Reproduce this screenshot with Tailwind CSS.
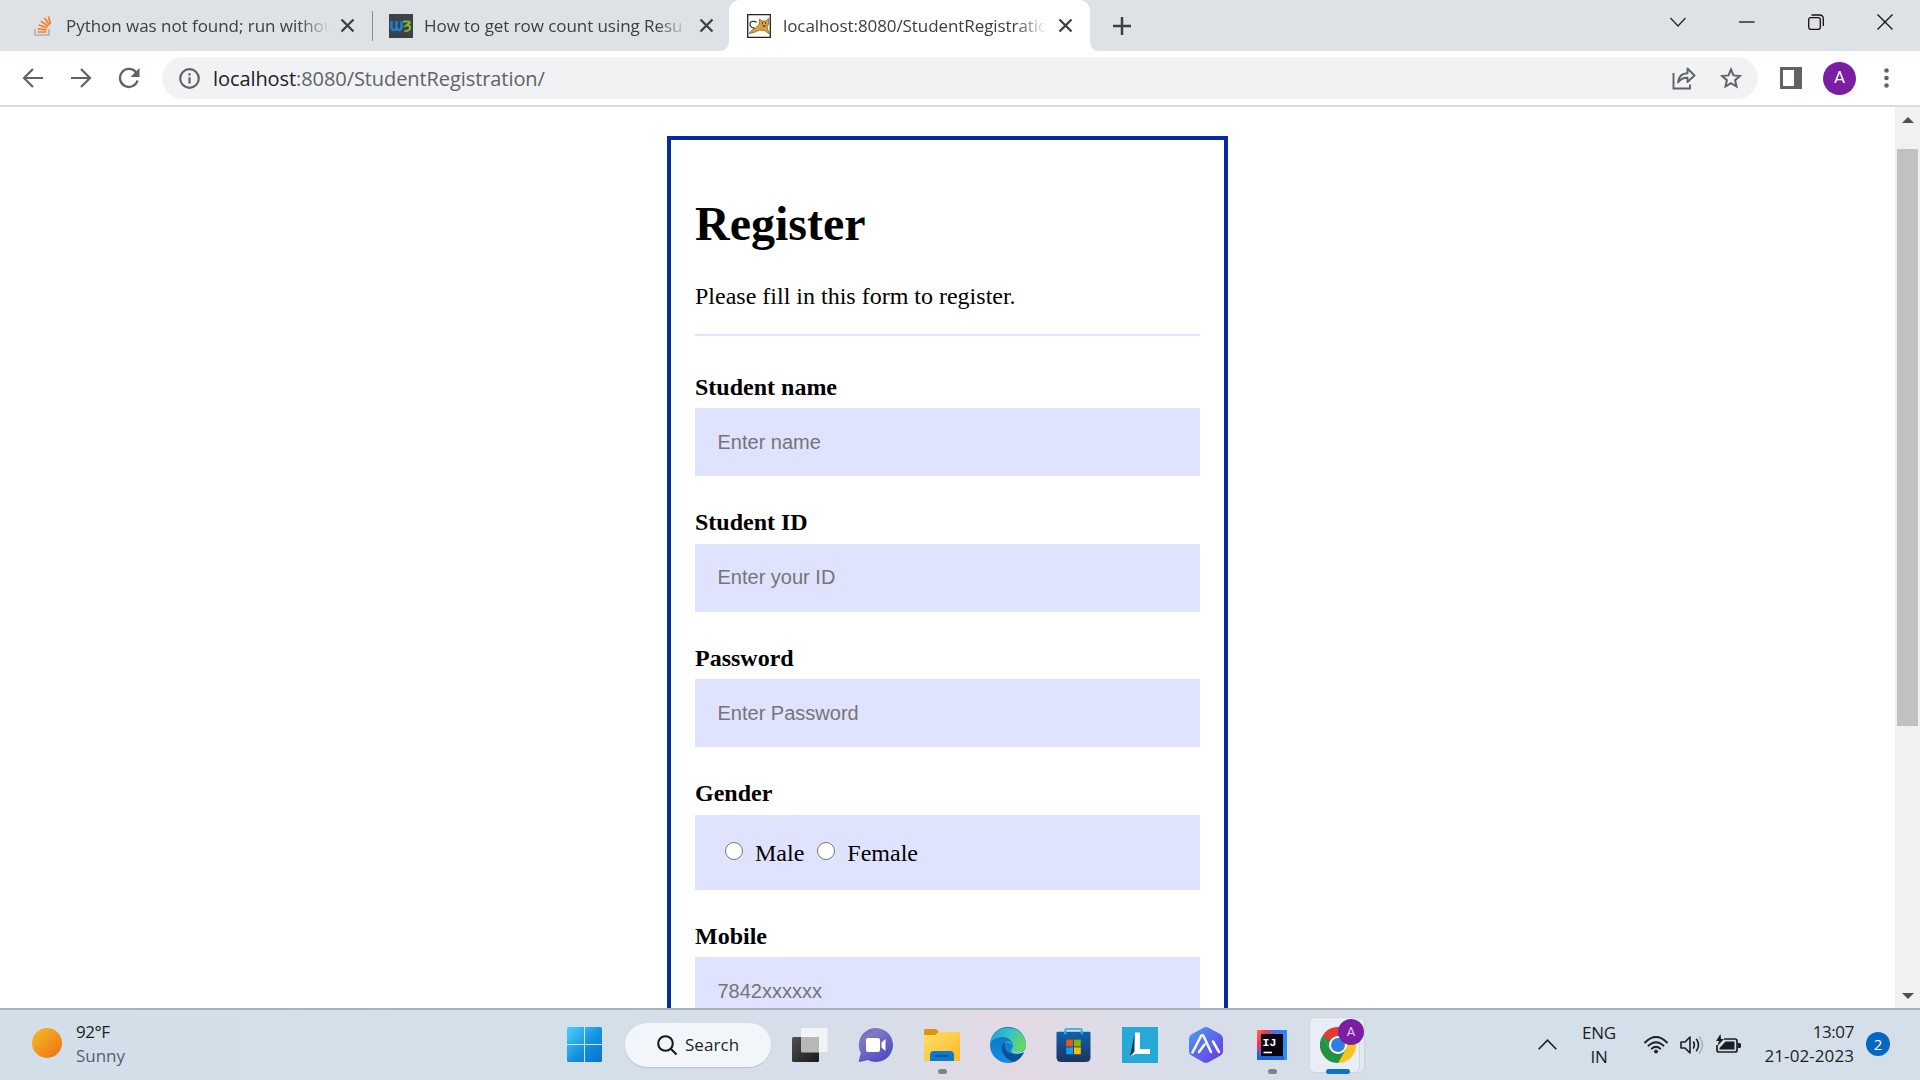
<!DOCTYPE html>
<html lang="en">
<head>
<meta charset="utf-8">
<title>Student Registration</title>
<script src="https://cdn.jsdelivr.net/npm/@tailwindcss/browser@4"></script>
</head>
<body class="flex h-[1080px] w-[1920px] flex-col overflow-hidden bg-white font-['Open_Sans',sans-serif]">

<!-- Tab strip -->
<header class="flex h-[51px] shrink-0 bg-[#dee1e6] text-[17px] text-[#3c4043]">
  <div class="flex w-[372px] items-center pl-[33px]">
    <svg class="mt-[1px] h-5 w-[19px]" viewBox="0 0 19 20" fill="none"><path d="M2 13v6h14v-6" stroke="#bcbbbb" stroke-width="2"/><path d="M4.500 16h9M4.700 12.800l9 1M5.700 9l8.500 2.700M8 5.200l7.300 5M11.500 2l5 7M15.500 .5l2 7.500" stroke="#f48024" stroke-width="1.700"/></svg>
    <span class="ml-[14px] w-[264px] whitespace-nowrap tracking-[-0.04px] [mask-image:linear-gradient(to_right,#000_88%,transparent)]">Python was not found; run withou</span>
    <svg class="ml-[10px] h-[15px] w-[15px] shrink-0" viewBox="0 0 15 15" stroke="#3c4043" stroke-width="2.300"><path d="M1.500 1.500l12 12M13.500 1.500l-12 12"/></svg>
  </div>
  <div class="mt-[11px] h-[30px] w-px bg-[#858a90]"></div>
  <div class="flex w-[356px] items-center pl-4">
    <svg class="h-6 w-6 shrink-0" viewBox="0 0 24 24" fill="none"><path fill="#3d4149" d="M0 0h24v24H0z"/><path d="M2.500 7v6q0 3 2.500 3t2.500-3V7v6q0 3 2.500 3t2.500-3V7" stroke="#1b83cb" stroke-width="2.500"/><path d="M14 7.500h5.500q1.500 0 1 1.500l-3 2.500q3.800-.5 3.500 2.500-.3 3-5.500 3" stroke="#86b52e" stroke-width="2.200"/></svg>
    <span class="ml-[11px] w-[264px] whitespace-nowrap tracking-[-0.06px] [mask-image:linear-gradient(to_right,#000_88%,transparent)]">How to get row count using Resu</span>
    <svg class="ml-[11px] h-[15px] w-[15px] shrink-0" viewBox="0 0 15 15" stroke="#3c4043" stroke-width="2.300"><path d="M1.500 1.500l12 12M13.500 1.500l-12 12"/></svg>
  </div>
  <div class="relative flex w-[361px] items-center rounded-t-[11px] bg-white pl-[18px]">
    <svg class="absolute bottom-0 left-[-10px] h-[10px] w-[10px]" viewBox="0 0 10 10"><path fill="#fff" d="M10 0v10H0Q10 10 10 0z"/></svg>
    <svg class="absolute right-[-10px] bottom-0 h-[10px] w-[10px]" viewBox="0 0 10 10"><path fill="#fff" d="M0 0v10h10Q0 10 0 0z"/></svg>
    <svg class="h-6 w-6 shrink-0" viewBox="0 0 24 24" fill="none"><path fill="#fbfaf6" stroke="#222" stroke-width="1.300" d="M.7.700h22.600v22.600H.7z"/><path d="M6.500 14Q3 13 3 10t3.500-2.500q2-.3 3 1" stroke="#333" stroke-width="1.200"/><path d="M12.500 10V5l2.500 2h4l2.500-2.500V10l-1.500 3.500 2.500 6.500-5-3.500-5-.5-5.500 2.500-5 1Q4 16 9 13.500z" fill="#d9a03c" stroke="#7a5a20" stroke-width=".7"/><path d="M15 9h.9M18.200 9h.9" stroke="#222" stroke-width="1.300"/><path d="M15.500 11.500l1.500 1 1.500-1M7.500 15l-1.500-2" stroke="#222" stroke-width="1"/></svg>
    <span class="ml-3 w-[264px] whitespace-nowrap tracking-[-0.08px] [mask-image:linear-gradient(to_right,#000_88%,transparent)]">localhost:8080/StudentRegistratio</span>
    <svg class="ml-[11px] h-[15px] w-[15px] shrink-0" viewBox="0 0 15 15" stroke="#3c4043" stroke-width="2.300"><path d="M1.500 1.500l12 12M13.500 1.500l-12 12"/></svg>
  </div>
  <svg class="mt-4 ml-[22px] h-5 w-5" viewBox="0 0 20 20" stroke="#3c4043" stroke-width="2.500"><path d="M10 1v18M1 10h18"/></svg>
  <div class="ml-auto flex h-[43px] items-center gap-[53px] pr-[27px] text-black">
    <svg class="h-4 w-4" viewBox="0 0 16 16" fill="none" stroke="#222" stroke-width="1.200"><path d="M.5 4l7.500 8 7.500-8"/></svg>
    <svg class="h-4 w-4" viewBox="0 0 16 16" fill="none" stroke="#111" stroke-width="1.300"><path d="M0 8h15.500"/></svg>
    <svg class="h-4 w-4" viewBox="0 0 16 16" fill="none" stroke="#111" stroke-width="1.300"><rect x=".7" y="3.700" width="11.600" height="11.600" rx="2"/><path d="M3.500 1h8.500a3.300 3.300 0 0 1 3.300 3.300v7.700"/></svg>
    <svg class="h-4 w-4" viewBox="0 0 16 16" fill="none" stroke="#111" stroke-width="1.300"><path d="M.5.500l15 15M15.500.500l-15 15"/></svg>
  </div>
</header>

<!-- Toolbar -->
<nav class="flex h-[56px] shrink-0 items-center border-b-2 border-[#dadce0] bg-white pl-[22px]">
  <svg class="h-[22px] w-[22px]" viewBox="0 0 22 22" fill="none" stroke="#5f6368" stroke-width="2.200"><path d="M21 11H2.500M11 2L2 11l9 9"/></svg>
  <svg class="ml-[26px] h-[22px] w-[22px]" viewBox="0 0 22 22" fill="none" stroke="#5f6368" stroke-width="2.200"><path d="M1 11h18.500M11 2l9 9-9 9"/></svg>
  <svg class="ml-[26px] h-[22px] w-[22px]" viewBox="0 0 22 22" fill="none"><path d="M18.500 6A9 9 0 1 0 19.600 13.500" stroke="#5f6368" stroke-width="2.300"/><path d="M21.500 1v9h-9z" fill="#5f6368"/></svg>
  <div class="ml-[22px] flex h-[42px] w-[1596px] items-center rounded-full bg-[#f0f2f4] pl-[17px]">
    <svg class="h-[21px] w-[21px]" viewBox="0 0 21 21" fill="none" stroke="#5f6368" stroke-width="2.200"><circle cx="10.500" cy="10.500" r="9.300"/><path d="M10.500 9.300v6.200M10.500 5.300v2.300"/></svg>
    <span class="mt-[2px] ml-[13px] text-[20px] leading-none tracking-[-0.08px] whitespace-nowrap text-[#5f6368]"><span class="text-[#202124]">localhost</span>:8080/StudentRegistration/</span>
    <svg class="ml-auto h-6 w-6" viewBox="0 0 24 24" fill="none" stroke="#5f6368" stroke-width="1.900"><path d="M1.500 7v15.500H18v-4"/><path d="M6 16.500Q7 7.500 15.500 7.300V2.500l7 7-7 6.500v-4.300Q9.500 11.500 6 16.500z" stroke-linejoin="round"/></svg>
    <svg class="mr-4 ml-[24px] h-[22px] w-[22px]" viewBox="0 0 22 22" fill="none" stroke="#5f6368" stroke-width="2"><path d="M11 2.500l2.500 5.900 6.400.6-4.800 4.200 1.400 6.300L11 16.200l-5.500 3.300 1.400-6.300L2.100 9l6.400-.6z"/></svg>
  </div>
  <svg class="ml-[22px] h-[22px] w-[22px]" viewBox="0 0 22 22"><path fill="#5f6368" d="M0 0h22v22H0z"/><path fill="#fff" d="M3 3h11v16H3z"/></svg>
  <div class="ml-[21px] flex h-[33px] w-[33px] items-center justify-center rounded-full bg-[#7b1fa2] font-['Roboto'] text-[17px] text-white">A</div>
  <svg class="ml-[28px] h-5 w-[5px]" viewBox="0 0 5 20" fill="#5f6368"><circle cx="2.500" cy="2.500" r="2.300"/><circle cx="2.500" cy="10" r="2.300"/><circle cx="2.500" cy="17.500" r="2.300"/></svg>
</nav>

<!-- Page viewport -->
<div class="flex h-[901px] shrink-0 overflow-hidden">
  <main class="h-[901px] w-[1895px] overflow-hidden pt-[29px] pl-[667px]">
    <form class="h-[1100px] w-[561px] border-4 border-[#062a9f] px-6 pt-[56px] font-['Liberation_Serif',serif] text-[24px] leading-[28px] text-black">
      <h1 class="text-[48px] leading-[55px] font-bold">Register</h1>
      <p class="mt-[31px]">Please fill in this form to register.</p>
      <hr class="mt-[24px] mb-[37px] border-t-2 border-[#dfe3fe]">
      <div class="w-[505px]">
        <label class="block font-bold">Student name</label>
        <input class="mt-[7px] block h-[68px] w-full bg-[#dfe3fe] px-[22.5px] font-['Liberation_Sans',sans-serif] text-[20px] placeholder:text-[#757575]" placeholder="Enter name">
        <label class="mt-[32px] block font-bold">Student ID</label>
        <input class="mt-[8px] block h-[68px] w-full bg-[#dfe3fe] px-[22.5px] pb-[2px] font-['Liberation_Sans',sans-serif] text-[20px] placeholder:text-[#757575]" placeholder="Enter your ID">
        <label class="mt-[32px] block font-bold">Password</label>
        <input class="mt-[7px] block h-[68px] w-full bg-[#dfe3fe] px-[22.5px] font-['Liberation_Sans',sans-serif] text-[20px] placeholder:text-[#757575]" placeholder="Enter Password">
        <label class="mt-[32px] block font-bold">Gender</label>
        <div class="mt-[8px] flex h-[75px] items-center bg-[#dfe3fe] pl-[30px]">
          <span class="mt-[-4px] h-[18px] w-[18px] rounded-full border-[1.5px] border-[#767676] bg-white"></span><span class="ml-[12px]">Male</span>
          <span class="mt-[-4px] ml-[13px] h-[18px] w-[18px] rounded-full border-[1.5px] border-[#767676] bg-white"></span><span class="ml-[12px]">Female</span>
        </div>
        <label class="mt-[32px] block font-bold">Mobile</label>
        <input class="mt-[7px] block h-[68px] w-full bg-[#dfe3fe] px-[22.5px] font-['Liberation_Sans',sans-serif] text-[20px] placeholder:text-[#757575]" placeholder="7842xxxxxx">
      </div>
    </form>
  </main>
  <aside class="flex w-[25px] flex-col items-center bg-[#f1f1f1]">
    <svg class="mt-[10px] h-[6px] w-[12px]" viewBox="0 0 12 6"><path fill="#505050" d="M6 0l6 6H0z"/></svg>
    <div class="mt-[26px] h-[577px] w-[21px] bg-[#c1c1c1]"></div>
    <svg class="mt-auto mb-[9px] h-[6px] w-[12px]" viewBox="0 0 12 6"><path fill="#505050" d="M6 6L0 0h12z"/></svg>
  </aside>
</div>

<!-- Taskbar -->
<footer class="flex h-[72px] shrink-0 items-center border-t-2 border-[#a9b1bb] bg-[linear-gradient(to_right,#d2dfe9_0%,#d3dfe9_28%,#d8dee9_46%,#e3d9e4_53%,#d9dee9_60%,#d3dfe9_75%,#d4dfea_100%)] text-[16px] leading-6 text-[#1b1f24]">
  <div class="flex w-[551px] items-center pl-8">
    <div class="mt-[-4px] h-[30px] w-[30px] rounded-full bg-linear-to-br from-[#f0bd2c] to-[#f26a0c]"></div>
    <div class="mt-[-3px] ml-[14px] text-[17px]"><div class="tracking-[-0.5px]">92°F</div><div class="tracking-[-0.05px] text-[#56606c]">Sunny</div></div>
  </div>
  <div class="flex w-[66px] justify-center">
    <svg class="mt-[-1px] h-[35px] w-[35px]" viewBox="0 0 35 35"><defs><linearGradient id="win" x1="0" y1="0" x2="1" y2="1"><stop stop-color="#4fd0fc"/><stop offset=".55" stop-color="#1391e0"/><stop offset="1" stop-color="#0672ce"/></linearGradient></defs><path fill="url(#win)" d="M1.500 0H17v17H0V1.500Q0 0 1.500 0zM18 0h15.500Q35 0 35 1.500V17H18zM0 18h17v17H1.500Q0 35 0 33.500zM18 18h17v15.500q0 1.500-1.500 1.500H18z"/></svg>
  </div>
  <div class="ml-2 flex h-[44px] w-[146px] items-center rounded-full bg-[#f2f6fa] pl-8 shadow-[0_1px_1px_#b9c1cc]">
    <svg class="h-[20px] w-[20px]" viewBox="0 0 20 20" fill="none" stroke="#16191d" stroke-width="2.100"><circle cx="8.500" cy="8.500" r="7.300"/><path d="M13.500 13.500l6 6"/></svg>
    <span class="ml-2 text-[17px] tracking-[0.05px]">Search</span>
  </div>
  <div class="ml-[6px] flex">
    <div class="relative flex h-[56px] w-[66px] items-center justify-center">
      <svg class="mt-[-1px] h-[36px] w-[36px]" viewBox="0 0 36 36"><defs><linearGradient id="dark" x1="0" y1="0" x2="1" y2="1"><stop stop-color="#505050"/><stop offset="1" stop-color="#191919"/></linearGradient></defs><rect y="10" width="27" height="25" rx="1.500" fill="url(#dark)"/><rect x="9" y="1" width="26.500" height="24" rx="1.500" fill="#f5f5f5" fill-opacity=".9"/><path d="M9 10h18v15.500H10.500Q9 25.500 9 24.500z" fill="#b8b8b8"/></svg>
    </div>
    <div class="relative flex h-[56px] w-[66px] items-center justify-center">
      <svg class="mt-[-1px] mr-[1px] h-[36px] w-[36px]" viewBox="0 0 36 36"><defs><linearGradient id="chat" x1="0" y1="0" x2=".6" y2="1"><stop stop-color="#5b62bd"/><stop offset=".3" stop-color="#8079c4"/><stop offset="1" stop-color="#504ec3"/></linearGradient></defs><path fill="url(#chat)" d="M18 1a17 17 0 1 1-8 32L2 35q-1.500 0-1.200-1.500L2.800 26A17 17 0 0 1 18 1z"/><rect x="8" y="11" width="14" height="14" rx="2" fill="#fff"/><path fill="#fff" d="M23.500 15.500L27.500 12v12l-4-3.500z"/></svg>
    </div>
    <div class="relative flex h-[56px] w-[66px] items-center justify-center">
      <svg class="mt-[-1px] h-[36px] w-[36px]" viewBox="0 0 36 36"><defs><linearGradient id="fold" x1="0" y1="0" x2="1" y2="1"><stop stop-color="#ffdf6e"/><stop offset="1" stop-color="#fcb91f"/></linearGradient></defs><path fill="#d9960e" d="M0 3.500Q0 2 1.500 2H12l4 4-4 4H0z"/><path fill="url(#fold)" d="M0 8h11l4-3h19.500Q36 5 36 6.500V34H0z"/><path fill="#0f79cb" d="M6 34v-6q0-4 4-4h16q4 0 4 4v6z"/><path d="M11 29h14" stroke="#07508e" stroke-width="1.500"/></svg>
      <span class="absolute bottom-[-1px] h-[5px] w-[9px] rounded-full bg-[#7d838b]"></span>
    </div>
    <div class="relative flex h-[56px] w-[66px] items-center justify-center">
      <svg class="mt-[-1px] h-[36px] w-[36px]" viewBox="0 0 36 36"><defs><linearGradient id="eg" x1="0" y1=".3" x2="1" y2=".6"><stop stop-color="#1fa2dc"/><stop offset=".5" stop-color="#36c4c4"/><stop offset="1" stop-color="#6bdb55"/></linearGradient><linearGradient id="eb" x1="0" y1="0" x2="0" y2="1"><stop stop-color="#0f6fc0"/><stop offset="1" stop-color="#1290e0"/></linearGradient></defs><circle cx="18" cy="18" r="18" fill="url(#eb)"/><path fill="url(#eg)" d="M.2 16.500A18 18 0 0 1 36 17q0 8.500-9 8.500-5.500 0-6-2 2-2 2-5Q21.500 10 12.500 10 4 10 .2 16.500z"/><path fill="#d7dde9" d="M14.500 17q3-4 7 0 2 3-.3 6 .2 3.500 6.300 3.500 3.500 0 6-1.600.8 0 .3 1.100L30 32l7 4V18q-1.500 7.500-9.500 7.500-5 0-6.500-2 2-3 1-6-2-4-6-2.500z"/><path fill="#0d4f96" d="M15 15.500q-5 3-2.500 9.500Q16 33 24 34.800q5.500-2 9-7.500.5-1.800-1-1.200-4 2.200-9.500.8-8-2.400-8-8.400z"/></svg>
    </div>
    <div class="relative flex h-[56px] w-[66px] items-center justify-center">
      <svg class="mt-[-1px] mr-[1px] h-[35px] w-[35px]" viewBox="0 0 36 36"><defs><linearGradient id="store" x1="0" y1="0" x2="0" y2="1"><stop stop-color="#0e62af"/><stop offset="1" stop-color="#1d345b"/></linearGradient></defs><path d="M9.500 8V3q0-1 1-1h15q1 0 1 1v5" fill="none" stroke="#41b3e6" stroke-width="2"/><path fill="url(#store)" d="M.5 6.500q0-1.500 1.500-1.500h32q1.500 0 1.500 1.500V31q0 5-5 5h-25q-5 0-5-5z"/><path d="M9.500 5v2.500M26.500 5v2.500" stroke="#41b3e6" stroke-width="2"/><path fill="#f1511b" d="M10.500 13h7v7h-7z"/><path fill="#80b900" d="M18.500 13h7v7h-7z"/><path fill="#05a6f0" d="M10.500 21h7v7h-7z"/><path fill="#fbbc09" d="M18.500 21h7v7h-7z"/></svg>
    </div>
    <div class="relative flex h-[56px] w-[66px] items-center justify-center">
      <svg class="mt-[-1px] h-[36px] w-[36px]" viewBox="0 0 36 36"><path fill="#27a9d8" d="M0 0h36v36H0z"/><path fill="#12335f" d="M12.500 7v19L8 29.500z"/><path fill="#fff" d="M13 5.500h5V22h10v5H13l-5 2.500 4.500-5z"/></svg>
    </div>
    <div class="relative flex h-[56px] w-[66px] items-center justify-center">
      <svg class="mt-[-1px] h-[36px] w-[36px]" viewBox="0 0 36 36"><defs><linearGradient id="ai" x1="0" y1="0" x2="1" y2="1"><stop stop-color="#4ba2ee"/><stop offset="1" stop-color="#6a2fea"/></linearGradient></defs><path fill="url(#ai)" d="M15.500.800q2.500-1.500 5 0l12 6.500Q35 9 35 11.500v13q0 2.500-2.500 4l-12 6.700q-2.500 1.300-5 0l-12-6.700Q1 27 1 24.500v-13Q1 9 3.500 7.300z"/><path d="M4.500 25.500L13 9q1.200-2 2.500 0L23 25M11 25l5.500-7.500M25 14.500L31 25" fill="none" stroke="#f3f4ff" stroke-width="2.600" stroke-linejoin="round" stroke-linecap="round"/></svg>
    </div>
    <div class="relative flex h-[56px] w-[66px] items-center justify-center">
      <svg class="mt-[-1px] h-[30px] w-[30px]" viewBox="0 0 30 30"><defs><linearGradient id="ij" x1="0" y1="0" x2="1" y2=".5"><stop stop-color="#fe7a33"/><stop offset=".25" stop-color="#f22f60"/><stop offset=".5" stop-color="#3b76ed"/><stop offset="1" stop-color="#2694f2"/></linearGradient></defs><path fill="url(#ij)" d="M0 0h30v30H0z"/><path fill="#1d65de" d="M3 26h24v4H0V18z"/><path fill="#0c0210" d="M4 4h22v22H4z"/><path d="M6.500 22.500h8.500" stroke="#fff" stroke-width="1.600"/><text x="5.500" y="15.500" fill="#fff" font-family="Liberation Mono" font-size="11.500" font-weight="bold">IJ</text></svg>
      <span class="absolute bottom-[-1px] h-[5px] w-[9px] rounded-full bg-[#7d838b]"></span>
    </div>
    <div class="relative flex h-[56px] w-[66px] items-center justify-center">
      <span class="absolute left-[10px] h-[56px] w-[50px] rounded-md border border-[#cdd3dc] bg-[#e5eaf2]"></span>
      <span class="absolute left-[4px] h-[56px] w-[51px] rounded-md border border-[#d0d6de] bg-[#e9edf4]"></span>
      <svg class="relative mt-[-1px] mr-[1px] h-[36px] w-[36px]" viewBox="0 0 36 36"><path fill="#e33b2e" d="M18 18L2.400 9A18 18 0 0 1 33.600 9z"/><path fill="#fcc31e" d="M18 18l15.600-9A18 18 0 0 1 18 36z"/><path fill="#229342" d="M18 18l7.800 4.500L18 36A18 18 0 0 1 2.400 9l7.800 13.500z"/><path fill="#e33b2e" d="M2.400 9H18v9h-9z"/><path fill="#229342" d="M2.400 9l7.800 13.500L18 18z"/><circle cx="18" cy="18" r="9" fill="#fff"/><circle cx="18" cy="18" r="7" fill="#2f7de1"/></svg>
      <span class="absolute top-[2px] left-[33px] flex h-[26px] w-[26px] items-center justify-center rounded-full bg-[#7b1fa2] font-['Roboto'] text-[13px] text-[#e7cdf0]">A</span>
      <span class="absolute bottom-[-1px] h-[5px] w-6 rounded-full bg-[#0b72cb]"></span>
    </div>
  </div>
  <div class="ml-auto flex items-center pr-[30px]">
    <svg class="mt-[-2px] h-[11px] w-[19px]" viewBox="0 0 19 11" fill="none" stroke="#1b1f24" stroke-width="1.600"><path d="M.7 10.200l8.800-9 8.800 9"/></svg>
    <div class="ml-[24px] w-[36px] text-center text-[17px] tracking-[-0.2px]"><div>ENG</div><div>IN</div></div>
    <svg class="ml-[27px] h-[18px] w-[24px]" viewBox="0 0 24 18" fill="none" stroke="#1b1f24" stroke-width="1.800" stroke-linecap="round"><path d="M1 6.500Q12-4.500 23 6.500M4.500 9.700q7.500-7 15 0M7.700 12.700q4.300-4 8.600 0"/><circle cx="12" cy="15.500" r="1.600" fill="#1b1f24" stroke-width=".8"/></svg>
    <svg class="ml-3 h-[20px] w-[24px]" viewBox="0 0 24 20" fill="none" stroke="#1b1f24" stroke-width="1.600" stroke-linecap="round"><path d="M1 7h4l5-5v16l-5-5H1z" stroke-linejoin="round"/><path d="M13.500 7q1.800 3 0 6M16.500 4.300q4 5.700 0 11.400"/><path d="M19.500 2q6 8 0 16" stroke="#a9b3bf"/></svg>
    <svg class="mt-[-3px] ml-3 h-[20px] w-[25px]" viewBox="0 0 25 20" fill="none" stroke="#1b1f24" stroke-width="1.700"><path d="M8 5h11q2 0 2 2v9q0 2-2 2H3q-2 0-2-2v-5"/><path fill="#1b1f24" stroke="none" d="M22 9h1.500q1.500 0 1.500 1.500v2q0 1.500-1.500 1.500H22zM9.500 7.500H18.500v8H3.500v-1.500zM4.500 0L0 7h3L1.500 12 8 5H5z"/></svg>
    <div class="mt-[-3px] ml-[23px] w-[90px] text-right text-[17px] whitespace-nowrap"><div class="tracking-[-0.4px]">13:07</div><div class="tracking-[0.08px]">21-02-2023</div></div>
    <div class="mt-[-2px] ml-3 flex h-6 w-6 items-center justify-center rounded-full bg-[#0567c0] text-[15px] text-white">2</div>
  </div>
</footer>
</body>
</html>
